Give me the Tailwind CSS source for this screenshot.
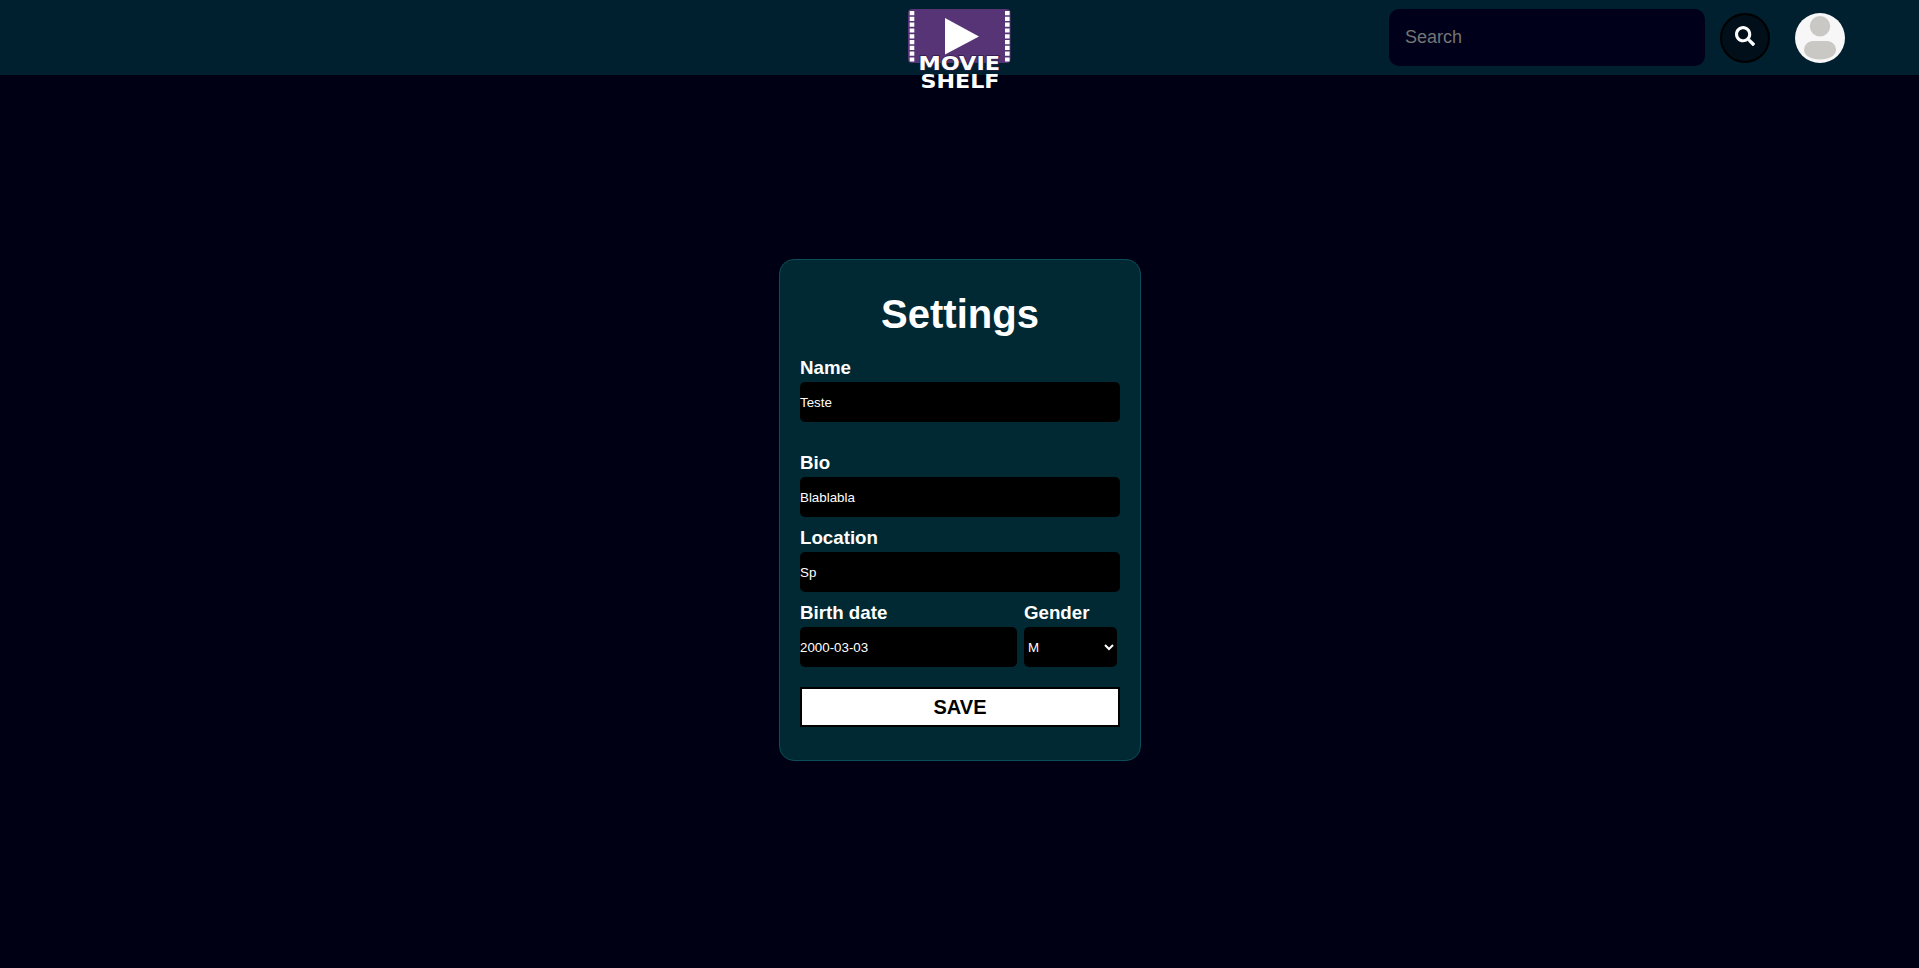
<!DOCTYPE html>
<html lang="en">
<head>
<meta charset="utf-8">
<title>Movie Shelf</title>
<script src="https://cdn.jsdelivr.net/npm/@tailwindcss/browser@4"></script>
</head>
<body class="h-screen overflow-hidden bg-[#000014] font-['Liberation_Sans',Arial,sans-serif] text-white flex flex-col">
<header class="relative h-[75px] shrink-0 bg-[#002030] flex items-center justify-end pr-[74px]">
  <svg class="absolute left-[900px] top-0" width="120" height="96" viewBox="0 0 120 96" aria-label="Movie Shelf">
    <rect x="8" y="9" width="102.500" height="54" rx="4" fill="#573475"/>
    <g stroke="#fff" stroke-width="4.600" stroke-dasharray="4.200 1.600">
      <path d="M12 11V62.500"/><path d="M107.300 11V62.500"/>
    </g>
    <path d="M45 18L79 36.500L45 54.500Z" fill="#fff"/>
    <g fill="#fff" stroke="#2d1c48" stroke-width="1.500" paint-order="stroke" font-family="DejaVu Sans, sans-serif" font-weight="700" font-size="19">
      <text x="18.500" y="70" textLength="81.500" lengthAdjust="spacingAndGlyphs">MOVIE</text>
    </g>
    <g fill="#fff" font-family="DejaVu Sans, sans-serif" font-weight="700" font-size="19">
      <text x="20.500" y="88" textLength="79" lengthAdjust="spacingAndGlyphs">SHELF</text>
    </g>
  </svg>
  <input class="w-[316px] h-[57px] rounded-[10px] bg-[#00001a] px-4 text-lg placeholder:text-[#757575] outline-none" placeholder="Search">
  <button class="ml-[15px] mt-px size-[50px] rounded-full border-2 border-black bg-[#000f19] flex items-center justify-center">
    <svg class="-mt-[5px]" width="20" height="20" viewBox="0 0 512 512" fill="#fff"><path d="M505 442.700L405.300 343c-4.500-4.500-10.600-7-17-7H372c27.600-35.300 44-79.700 44-128C416 93.100 322.900 0 208 0S0 93.100 0 208s93.100 208 208 208c48.300 0 92.700-16.400 128-44v16.300c0 6.400 2.500 12.500 7 17l99.700 99.700c9.400 9.400 24.600 9.400 33.900 0l28.300-28.300c9.400-9.400 9.400-24.600.1-34zM208 336c-70.700 0-128-57.200-128-128 0-70.700 57.200-128 128-128 70.700 0 128 57.200 128 128 0 70.700-57.200 128-128 128z"/></svg>
  </button>
  <svg class="ml-[25px] mt-px" width="50" height="50" viewBox="0 0 50 50">
    <circle cx="25" cy="25" r="25" fill="#f7f7f7"/>
    <circle cx="25" cy="13.300" r="10.200" fill="#c9c8c4"/>
    <path d="M18 28h14c5 0 9 4 9 9 0 5.500-7 9.500-16 9.500S9 42.500 9 37c0-5 4-9 9-9Z" fill="#c9c8c4"/>
  </svg>
</header>
<main class="flex justify-center pl-px pt-[184px]">
  <form class="w-[362px] h-[502px] rounded-[15px] border border-[#0d4d59] bg-[#002933] px-5 flex flex-col">
    <h1 class="mt-[31px] h-[46px] text-center text-[40px] leading-[46px] font-bold">Settings</h1>
    <label class="mt-[19px] h-[26px] text-[18.72px] leading-[24px] font-bold">Name</label>
    <input class="h-10 shrink-0 rounded-[5px] bg-black text-[13.333px] outline-none" value="Teste">
    <label class="mt-[29px] h-[26px] text-[18.72px] leading-[24px] font-bold">Bio</label>
    <input class="h-10 shrink-0 rounded-[5px] bg-black text-[13.333px] outline-none" value="Blablabla">
    <label class="mt-[9px] h-[26px] text-[18.72px] leading-[24px] font-bold">Location</label>
    <input class="h-10 shrink-0 rounded-[5px] bg-black text-[13.333px] outline-none" value="Sp">
    <div class="mt-[9px] flex gap-[7px]">
      <div class="w-[217px] flex flex-col">
        <label class="h-[26px] text-[18.72px] leading-[24px] font-bold">Birth date</label>
        <input class="h-10 w-full rounded-[5px] bg-black text-[13.333px] outline-none" value="2000-03-03">
      </div>
      <div class="w-[93px] flex flex-col">
        <label class="h-[26px] text-[18.72px] leading-[24px] font-bold">Gender</label>
        <select class="h-10 w-full rounded-[5px] bg-black pr-px text-[13.333px] text-white outline-none"><option>M</option><option>F</option></select>
      </div>
    </div>
    <button type="button" class="mt-5 h-10 shrink-0 border-2 border-black bg-white text-xl leading-[23px] font-bold text-black">SAVE</button>
  </form>
</main>
</body>
</html>
